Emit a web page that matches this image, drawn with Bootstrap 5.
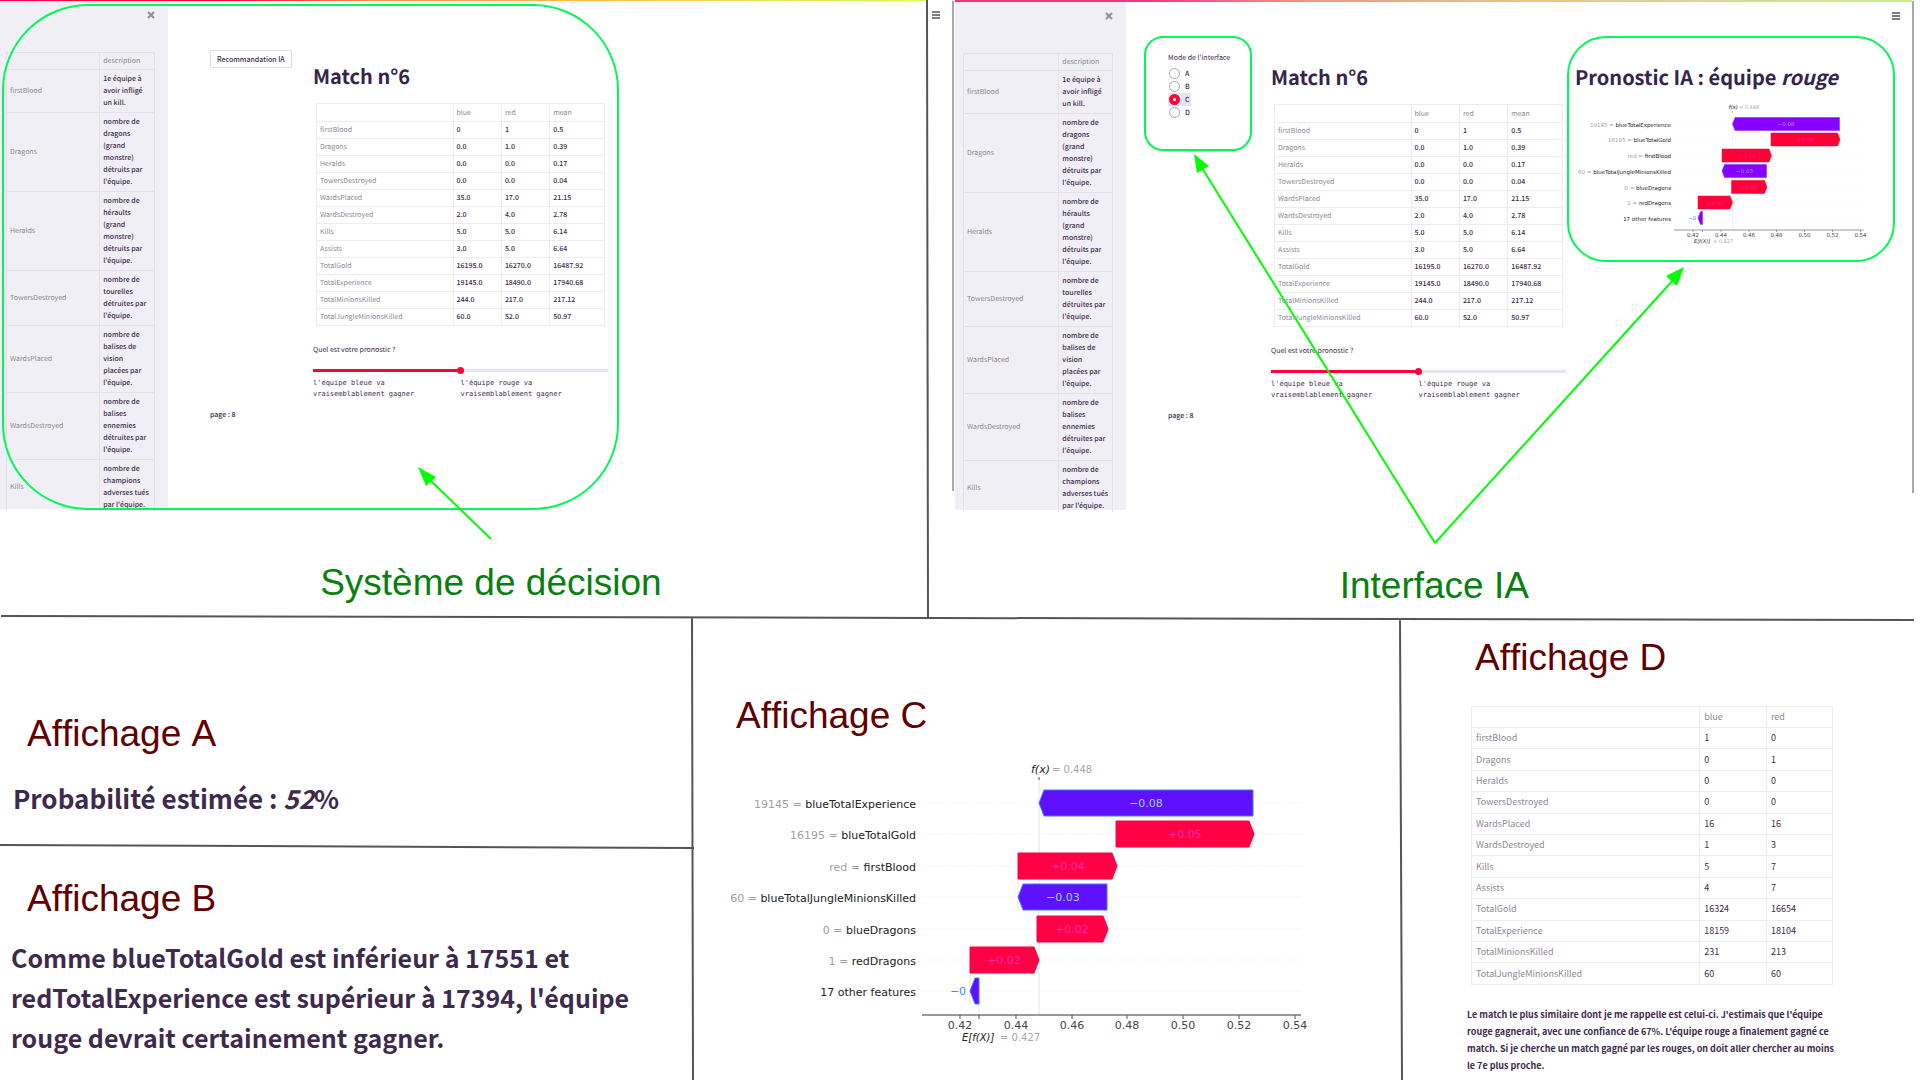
<!DOCTYPE html>
<html lang="fr">
<head>
<meta charset="utf-8">
<meta name="viewport" content="width=device-width, initial-scale=1">
<title>Système de décision et interface IA</title>
<link href="https://cdn.jsdelivr.net/npm/bootstrap@5.3.0/dist/css/bootstrap.min.css" rel="stylesheet">
<style>
  :root { --ink: #3d2a4d; --soft: #8f8797; --rule: #ededf1; --accent: #ff0037; }
  body { font-family: "Noto Sans CJK SC", "Noto Sans", sans-serif; color: var(--ink); background: #fff; }
  .board { min-height: 100vh; overflow: hidden; }
  .upper { min-height: 617px; }
  .pane-left { flex: 928 1 0; min-width: 0; }
  .pane-right { flex: 992 1 0; min-width: 0; }

  .app { display: grid; grid-template-rows: auto 1fr; font-size: 7px; font-weight: 500; line-height: 12px; text-rendering: geometricPrecision; }
  .app-left { grid-template-columns: 168fr 42fr 103fr 295fr 320fr; }
  .app-right { grid-template-columns: 171fr 42fr 103fr 295fr 7fr 300fr 39fr; }
  .window-row { padding: 0 8px 2px 0; }
  .strip-left { height: 1px; background: linear-gradient(90deg, #ff0037 0 24%, #ff8a4a 40%, #ffc94a 70%, #d8ff50); }
  .strip-right { height: 2px; background: linear-gradient(90deg, #f63380 0 20%, #f7908a 36%, #e8c58a 60%, #c8f08a); }

  .app-side { grid-row: 1 / 3; height: 508px; background: #f0eff5; padding: 6px 13px 0 6px; }
  .app-right .app-side { padding-left: 8px; }
  .plain-btn { border: 0; background: none; padding: 0; display: block; line-height: 0; }
  .app-side .plain-btn { margin: 4px 0 33px auto; }
  .app-tools { padding: 48px 0 0; grid-column: 3; }
  .app-main { grid-column: 4; padding-top: 60px; }
  .app-foot { grid-column: 3; grid-row: 2; padding-top: 9px; }
  .app-chart { grid-column: 6; padding-top: 60px; }
  .app-menu { grid-column: 7; grid-row: 1; }

  .app h1 { font-size: 20px; line-height: 30px; font-weight: 700; margin: 0; white-space: nowrap; color: #36244a; }
  .app-chart h1 { padding-left: 2px; }
  .stat-wrap { padding: 12px 3px 0; }
  .stat.table { margin: 0; color: var(--ink); border-color: var(--rule); --bs-table-bg: transparent; --bs-table-color: var(--ink); table-layout: fixed; font-size: 7px; line-height: 12px; }
  .stat.table > :not(caption) > * > * { padding: 2px 3px; font-weight: 500; vertical-align: middle; white-space: nowrap; }
  .stat-wrap .stat.table > thead > * > * { padding-top: 3px; }
  .stat.table > :not(caption) > * > th { color: var(--soft); font-weight: 400; }
  .stat.desc { border-color: #e3e2e9; }
  .stat.desc.table > tbody > * > * { padding: 3px; }
  .stat.desc.table > tbody > tr:last-child > *, .stat.desc.table > tbody > tr:last-child { padding-bottom: 0; border-bottom: 0; }
  .stat.wide { font-size: 9px; line-height: 12px; height: 279px; }
  .stat.wide.table > :not(caption) > * > * { padding: 4px; }
  .stat.wide.table > tbody > * > td { font-weight: 400; }

  .ask { display: block; margin-top: 18px; font-weight: 400; }
  .guess { appearance: none; -webkit-appearance: none; display: block; width: 100%; height: 8px; margin: 10px 0 4px; background: linear-gradient(90deg, var(--accent) 50%, #e6e4f2 50%) center / 100% 3px no-repeat; }
  .guess::-webkit-slider-thumb { -webkit-appearance: none; width: 7px; height: 7px; border-radius: 50%; background: var(--accent); }
  .guess::-moz-range-thumb { width: 7px; height: 7px; border: 0; border-radius: 50%; background: var(--accent); }
  .ends { font-family: "DejaVu Sans Mono", monospace; font-size: 7px; line-height: 11px; font-weight: 400; white-space: nowrap; }
  .reco { border: 1px solid #dedde3; background: #fff; color: var(--ink); font-size: 7px; font-weight: 500; line-height: 12px; padding: 2px 6px; border-radius: 1px; white-space: nowrap; margin-top: 1px; }
  .modes { border: 0; padding: 2px 0 0; margin: 0; }
  .modes legend { font-size: 7px; line-height: 12px; margin: 0 0 3px; font-weight: 400; }
  .mode { display: flex; width: 23px; height: 13px; align-items: center; gap: 5px; }
  .mode input { appearance: none; -webkit-appearance: none; width: 11px; height: 11px; margin: 0 0 0 1px; border: 1px solid #aaa8ae; border-radius: 50%; background: #fff; }
  .mode input:checked { border: 4px solid var(--accent); }
  .mode:has(input:checked) { background: #e6e4f1; }

  .caption-text { font: 37px/44px "Liberation Sans", Arial, sans-serif; color: #088010; margin: 52px 0 0; white-space: nowrap; }
  .pane-left .caption-text { padding-left: 34.5%; }
  .pane-right .caption-text { padding-left: 41.5%; }
  .lower { display: grid; grid-template-columns: 692fr 708fr 520fr; }
  .show-title { font: 37px/44px "Liberation Sans", Arial, sans-serif; font-kerning: none; color: #620000; margin: 0; white-space: nowrap; }
  .show-ab { min-width: 0; padding: 95px 0 0 11px; }
  .show-c { min-width: 0; padding: 77px 80px 0 28px; }
  .show-d { min-width: 0; padding: 19px 87px 0 71px; }
  .verdict { font-size: 25px; line-height: 40px; font-weight: 700; white-space: nowrap; margin: 0; }
  .verdict-short { font-size: 26px; margin: 22px 0 59px; padding-left: 2px; }
  .similar { padding-top: 26px; }
  .memory { font-size: 9px; line-height: 17px; font-weight: 700; white-space: nowrap; margin: 21px 0 0 -4px; }

  .shap { display: block; width: 100%; font-family: "DejaVu Sans", sans-serif; font-size: 11px; }
  .shap-big { --neg: #5f10ff; --neg-edge: #3d7dff; --pos: #ff0044; --neg-text: #9cd0ff; --pos-text: #ff2cac; padding-top: 17px; box-sizing: content-box; }
  .shap-small { --neg: #8800ff; --neg-edge: #7a2cff; --pos: #ff0037; --neg-text: #b48cff; --pos-text: #ff2090; padding-top: 8px; box-sizing: content-box; }
  .marks { left: 0; top: 0; pointer-events: none; }
</style>
</head>
<body>
<div class="board d-flex flex-column position-relative">
  <section class="upper d-flex">
    <div class="pane-left">
      <div class="strip-left"></div>
      <div class="app app-left">
        <aside class="app-side">
          <button class="plain-btn" aria-label="Fermer"><svg width="8" height="8" viewBox="0 0 8 8"><path d="M1 1l6 6M7 1L1 7" stroke="#918e98" stroke-width="2"/></svg></button>
          <div class="descriptions" data-split="63"></div>
        </aside>
        <div class="app-tools"><button class="reco">Recommandation IA</button></div>
        <main class="app-main">
          <h1>Match n°6</h1>
          <div class="stat-wrap match"></div>
          <label class="ask" for="guess1">Quel est votre pronostic ?</label>
          <input class="guess" id="guess1" type="range" min="0" max="100" value="50">
          <div class="ends row g-0"><span class="col-6">l'équipe bleue va<br>vraisemblablement gagner</span><span class="col-6">l'équipe rouge va<br>vraisemblablement gagner</span></div>
        </main>
        <div class="app-foot">page : 8</div>
      </div>
      <h2 class="caption-text">Système de décision</h2>
    </div>
    <div class="pane-right">
      <div class="window-row d-flex">
        <button class="plain-btn align-self-start" aria-label="Menu"><svg width="27" height="20" viewBox="0 0 27 20"><path d="M4 12h8M4 15h8M4 18h8" stroke="#57505f" stroke-width="1.500"/></svg></button>
        <div class="flex-fill">
          <div class="strip-right"></div>
          <div class="app app-right">
            <aside class="app-side">
              <button class="plain-btn" aria-label="Fermer"><svg width="8" height="8" viewBox="0 0 8 8"><path d="M1 1l6 6M7 1L1 7" stroke="#918e98" stroke-width="2"/></svg></button>
              <div class="descriptions" data-split="64"></div>
            </aside>
            <div class="app-tools">
              <fieldset class="modes">
                <legend>Mode de l'interface</legend>
                <label class="mode"><input type="radio" name="mode">A</label>
                <label class="mode"><input type="radio" name="mode">B</label>
                <label class="mode"><input type="radio" name="mode" checked>C</label>
                <label class="mode"><input type="radio" name="mode">D</label>
              </fieldset>
            </div>
            <main class="app-main">
              <h1>Match n°6</h1>
              <div class="stat-wrap match"></div>
              <label class="ask" for="guess2">Quel est votre pronostic ?</label>
              <input class="guess" id="guess2" type="range" min="0" max="100" value="50">
              <div class="ends row g-0"><span class="col-6">l'équipe bleue va<br>vraisemblablement gagner</span><span class="col-6">l'équipe rouge va<br>vraisemblablement gagner</span></div>
            </main>
            <div class="app-chart">
              <h1>Pronostic IA : équipe <em>rouge</em></h1>
              <div class="chart-slot" data-kind="shap-small"></div>
            </div>
            <div class="app-menu"><button class="plain-btn" aria-label="Menu"><svg width="39" height="20" viewBox="0 0 39 20"><path d="M19 11h8M19 14h8M19 17h8" stroke="#57505f" stroke-width="1.500"/></svg></button></div>
            <div class="app-foot">page : 8</div>
          </div>
        </div>
      </div>
      <h2 class="caption-text">Interface IA</h2>
    </div>
  </section>

  <section class="lower flex-fill">
    <div class="show-ab">
      <h2 class="show-title ps-3">Affichage A</h2>
      <p class="verdict verdict-short">Probabilité estimée : <em>52</em>%</p>
      <h2 class="show-title ps-3">Affichage B</h2>
      <p class="verdict mt-3">Comme blueTotalGold est inférieur à 17551 et<br>redTotalExperience est supérieur à 17394, l'équipe<br>rouge devrait certainement gagner.</p>
    </div>
    <div class="show-c">
      <h2 class="show-title ps-3">Affichage C</h2>
      <div class="chart-slot" data-kind="shap-big"></div>
    </div>
    <div class="show-d">
      <h2 class="show-title ps-1">Affichage D</h2>
      <div class="similar"></div>
      <p class="memory">Le match le plus similaire dont je me rappelle est celui-ci. J'estimais que l'équipe<br>rouge gagnerait, avec une confiance de 67%. L'équipe rouge a finalement gagné ce<br>match. Si je cherche un match gagné par les rouges, on doit aller chercher au moins<br>le 7e plus proche.</p>
    </div>
  </section>

  <svg class="marks position-absolute w-100 h-100" viewBox="0 0 1920 1080" preserveAspectRatio="none" fill="none" aria-hidden="true">
    <g stroke="#555" stroke-width="2">
      <path d="M927 0L928 617M1 616L1914 620M692 618L693 1080M1400 618L1402 1080M0 845L694 848"/>
    </g>
    <path d="M953 1V491M1913 1V493" stroke="#a9a8ad" stroke-width="2"/>
    <g stroke="#00fa55" stroke-width="2">
      <rect x="3" y="5" width="615" height="504" rx="85"/>
      <rect x="1145" y="37" width="106" height="113" rx="18"/>
      <rect x="1568" y="37" width="326" height="224" rx="38"/>
    </g>
    <g stroke="#0f0" stroke-width="2">
      <path d="M491 539L430 480M1435 543L1202 168M1435 543L1674 279"/>
      <path d="M418 467L436 477L426 486ZM1194 154L1209 166L1197 173ZM1684 267L1666 276L1677 286Z" fill="#0f0" stroke="none"/>
    </g>
  </svg>
</div>

<script src="https://cdn.jsdelivr.net/npm/bootstrap@5.3.0/dist/js/bootstrap.bundle.min.js"></script>
<script>
  const names = ['firstBlood','Dragons','Heralds','TowersDestroyed','WardsPlaced','WardsDestroyed','Kills','Assists','TotalGold','TotalExperience','TotalMinionsKilled','TotalJungleMinionsKilled'];
  const match = [['0','1','0.5'],['0.0','1.0','0.39'],['0.0','0.0','0.17'],['0.0','0.0','0.04'],['35.0','17.0','21.15'],['2.0','4.0','2.78'],['5.0','5.0','6.14'],['3.0','5.0','6.64'],['16195.0','16270.0','16487.92'],['19145.0','18490.0','17940.68'],['244.0','217.0','217.12'],['60.0','52.0','50.97']];
  const similar = [[1,0],[0,1],[0,0],[0,0],[16,16],[1,3],[5,7],[4,7],[16324,16654],[18159,18104],[231,213],[60,60]];
  const descriptions = [
    ['firstBlood','1e équipe à|avoir infligé|un kill.'],
    ['Dragons','nombre de|dragons|(grand|monstre)|détruits par|l\'équipe.'],
    ['Heralds','nombre de|héraults|(grand|monstre)|détruits par|l\'équipe.'],
    ['TowersDestroyed','nombre de|tourelles|détruites par|l\'équipe.'],
    ['WardsPlaced','nombre de|balises de|vision|placées par|l\'équipe.'],
    ['WardsDestroyed','nombre de|balises|ennemies|détruites par|l\'équipe.'],
    ['Kills','nombre de|champions|adverses tués|par l\'équipe.']
  ];

  function statTable(heads, rows, widths, extra) {
    const cols = widths.map(w => `<col style="width:${w}%">`).join('');
    const head = heads.map(h => `<th scope="col">${h}</th>`).join('');
    const body = rows.map((r, i) => `<tr><th scope="row">${names[i]}</th>${r.map(v => `<td>${v}</td>`).join('')}</tr>`).join('');
    return `<table class="stat table table-bordered ${extra}"><colgroup>${cols}</colgroup><thead><tr><td></td>${head}</tr></thead><tbody>${body}</tbody></table>`;
  }
  document.querySelectorAll('.match').forEach(el => el.innerHTML = statTable(['blue','red','mean'], match, [47.4, 16.8, 16.8, 19], ''));
  document.querySelector('.similar').innerHTML = statTable(['blue','red'], similar, [63.2, 18.5, 18.3], 'wide');
  document.querySelectorAll('.descriptions').forEach(el => {
    const body = descriptions.map(([n, t]) => `<tr><th scope="row">${n}</th><td>${t.replace(/\|/g, '<br>')}</td></tr>`).join('');
    el.innerHTML = `<table class="stat desc table table-bordered"><colgroup><col style="width:${el.dataset.split}%"><col></colgroup><thead><tr><td></td><th scope="col">description</th></tr></thead><tbody>${body}</tbody></table>`;
  });

  // Waterfall: value, feature, bar start, bar end, sign, text, text centre
  const bars = [
    ['19145','blueTotalExperience',1039,1253,-1,'−0.08',1146],
    ['16195','blueTotalGold',1116,1254,1,'+0.05',1185],
    ['red','firstBlood',1018,1117,1,'+0.04',1068],
    ['60','blueTotalJungleMinionsKilled',1018,1107,-1,'−0.03',1063],
    ['0','blueDragons',1037,1108,1,'+0.02',1072],
    ['1','redDragons',970,1039,1,'+0.02',1004],
    ['','17 other features',970,979,-1,'−0',958]
  ];
  function waterfall(kind) {
    let s = `<svg class="shap ${kind}" viewBox="720 755 600 295" role="img" aria-label="Contributions">`;
    s += '<path d="M1039 778V1015M979 992V1015M1253 803V848M1018 866V911M1107 898V942M970 960V1005" stroke="#e4e4e4" fill="none"/><path d="M1039 777v3" stroke="#555"/>';
    bars.forEach(([v, f, a, b, sign, t, c], i) => {
      const y = 803 + Math.round(i * 31.4), top = y - 13, bot = y + 13;
      s += `<path d="M922 ${y}H1301" stroke="#ededed" stroke-dasharray="1 2"/>`;
      const d = sign > 0 ? `M${a} ${top}H${b - 5}L${b} ${y}L${b - 5} ${bot}H${a}Z` : `M${b} ${top}H${a + 5}L${a} ${y}L${a + 5} ${bot}H${b}Z`;
      s += `<path d="${d}" fill="var(${sign > 0 ? '--pos' : '--neg'})" stroke="var(${sign > 0 ? '--pos' : '--neg-edge'})"/>`;
      s += `<text x="916" y="${y + 5}" text-anchor="end" fill="#222">${v ? `<tspan fill="#a0a0a0">${v} = </tspan>` : ''}${f}</text>`;
      const col = i === 6 ? '#3d8bff' : `var(${sign > 0 ? '--pos-text' : '--neg-text'})`;
      s += `<text x="${c}" y="${y + 4}" text-anchor="middle" fill="${col}">${t}</text>`;
    });
    s += '<path d="M922 1015H1301" stroke="#777" stroke-width="1.500"/>';
    for (let k = 0; k < 7; k++) {
      const x = 960 + Math.round(k * 55.8);
      s += `<path d="M${x} 1015v4" stroke="#555"/><text x="${x}" y="1029" text-anchor="middle" fill="#444">${(0.42 + k * 0.02).toFixed(2)}</text>`;
    }
    s += '<path d="M979 1015v4" stroke="#555"/>';
    s += '<text x="1031" y="773" fill="#222"><tspan font-style="italic">f(x)</tspan></text><text x="1052" y="773" fill="#a8a8a8" font-size="10">= 0.448</text>';
    s += '<text x="962" y="1041" fill="#222" font-size="10"><tspan font-style="italic">E[f(X)]</tspan></text><text x="1000" y="1041" fill="#a8a8a8" font-size="10">= 0.427</text></svg>';
    return s;
  }
  document.querySelectorAll('.chart-slot').forEach(el => el.innerHTML = waterfall(el.dataset.kind));
</script>
</body>
</html>
